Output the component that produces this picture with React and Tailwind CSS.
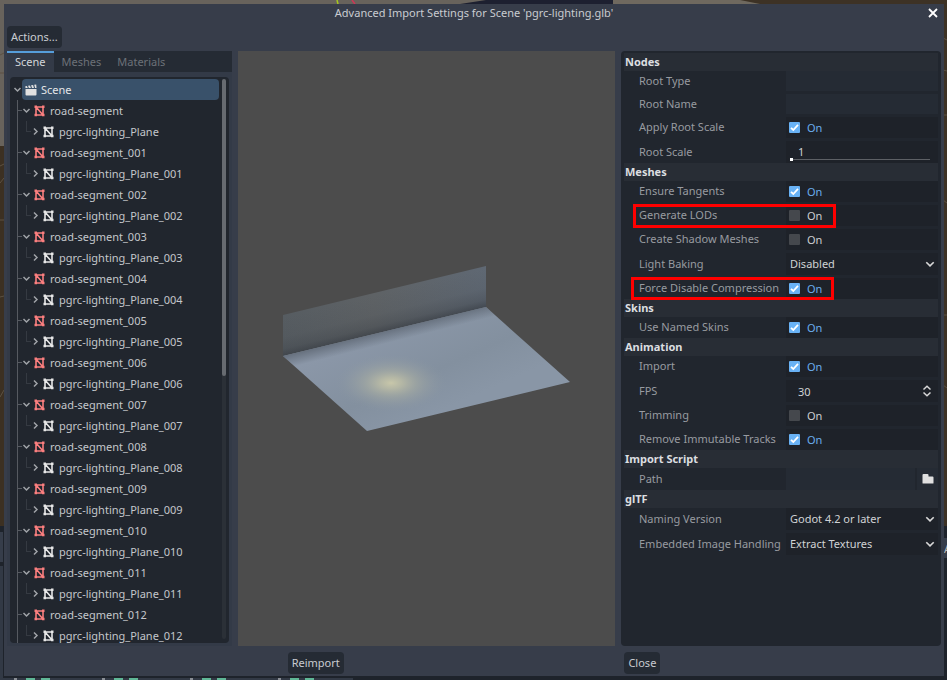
import React from "react";

const segments = ["", "_001", "_002", "_003", "_004", "_005", "_006", "_007", "_008", "_009", "_010", "_011", "_012"];

function Backdrop() {
  return (
    <svg viewBox="0 0 947 680" preserveAspectRatio="none" className="absolute inset-0 h-full w-full" aria-hidden="true">
      <rect width="947" height="680" fill="#1e232b" />
      <rect width="947" height="146" fill="#68635c" />
      <rect y="146" width="947" height="380" fill="#3c3022" />
      <rect x="700" width="247" height="526" fill="#3d3225" />
      <path d="M460 4L486 0H613V4Z" fill="#1d2030" />
      <path d="M613 0H740L760 4H613Z" fill="#6f695f" />
      <path d="M337 0L338 4" stroke="#a6c81c" strokeWidth="1.500" />
      <path d="M352 0L355 4" stroke="#cf3557" strokeWidth="1.500" />
      <path d="M0 55L4 53M0 73H4M0 166L4 164M0 183L4 178M0 220H4M0 297L4 296M0 397L4 390M943 38L947 40M943 70L947 71M943 115H947M943 200L947 203M943 315H947M943 385L947 388" stroke="#5c5142" />
      <rect y="532" width="3" height="30" fill="#363d4a" />
      <rect y="566" width="3" height="114" fill="#323945" />
      <rect x="943" y="538" width="4" height="20" fill="#363d4a" />
      <text x="944" y="553" fontSize="11" fill="#b8bbc0">A</text>
      <rect y="678" width="353" height="2" fill="#323945" />
      {[14, 102, 190, 278].map((x) => (
        <g key={x}>
          <rect x={x} y="678" width="3" height="2" fill="#8b8f96" />
          <rect x={x + 12} y="678" width="9" height="2" fill="#5fb796" />
          <rect x={x + 27} y="678" width="9" height="2" fill="#5fb796" />
        </g>
      ))}
    </svg>
  );
}

function Chevron({ open = true, className = "" }) {
  return (
    <svg viewBox="0 0 9 9" className={"h-[9px] w-[9px] shrink-0 " + className} fill="none" stroke="currentColor" strokeWidth="1.5" aria-hidden="true">
      <path d={open ? "M1.5 3l3 3 3-3" : "M3 1.5l3 3-3 3"} />
    </svg>
  );
}

function MeshIcon({ className = "" }) {
  return (
    <svg viewBox="0 0 12 12" className={"h-3 w-3 shrink-0 " + className} aria-hidden="true">
      <path d="M2 2H9V10H2ZM2 2L9 10" fill="none" stroke="currentColor" strokeWidth="1.6" />
      <path d="M0.500 .5h2.500v2.500h-2.500zM8 .5h2.500v2.500h-2.500zM0.500 8.700h2.500v2.500h-2.500zM8 8.700h2.500v2.500h-2.500z" fill="currentColor" />
    </svg>
  );
}

function ClapperIcon() {
  return (
    <svg viewBox="0 0 12 12" className="h-3 w-3 shrink-0" fill="#e0e0e0" aria-hidden="true">
      <path d="M.5 5h11v5.500a1 1 0 0 1-1 1h-9a1 1 0 0 1-1-1zM.3 2.200l1.600-.3.9 2.200H.5zM3 1.700l2-.3.9 2.700h-2zM6.100 1.200l2-.3.9 3.200H7zM9.200.7l2-.3.300 3.700h-1.400z" />
    </svg>
  );
}

function Tree() {
  return (
    <div className="relative min-h-0 flex-1 overflow-hidden rounded-sm bg-[#21262e] pl-[3px] pt-[2px] text-[#c4c7cb]">
      <ul className="relative mr-[10px]">
        <li className="flex h-[21px] items-center">
          <Chevron className="text-[#a0a3a8]" />
          <span className="flex h-[21px] flex-1 items-center gap-1 rounded-sm bg-[#39516a] pl-[3px] text-[#e4e6e8]">
            <ClapperIcon />
            Scene
          </span>
        </li>
        <li className="ml-1 border-l border-[#565a61]">
          <ul>
            {segments.map((s) => (
              <li key={s}>
                <div className="flex h-[21px] items-center">
                  <span className="h-px w-1 bg-[#565a61]" />
                  <Chevron className="mr-[3px] text-[#a0a3a8]" />
                  <MeshIcon className="mr-1 text-[#fc7f7f]" />
                  road-segment{s}
                </div>
                <div className="flex h-[21px] items-center pl-2">
                  <span className="-mt-[10px] h-[11px] w-[5px] border-b border-l border-[#353a42]" />
                  <Chevron open={false} className="mr-[3px] text-[#a0a3a8]" />
                  <MeshIcon className="mr-1 text-[#e8e8e8]" />
                  pgrc-lighting_Plane{s}
                </div>
              </li>
            ))}
          </ul>
        </li>
      </ul>
      <div className="absolute bottom-1 right-[3px] top-[2px] w-1 rounded-full bg-[#2b3037]">
        <div className="h-[53%] rounded-full bg-[#676b71]" />
      </div>
    </div>
  );
}

function Viewport() {
  return (
    <div className="min-w-0 flex-1 bg-[#4c4c4c]">
      <svg viewBox="0 0 377 595" className="h-full w-full" role="img" aria-label="Model preview">
        <defs>
          <linearGradient id="floor" gradientUnits="userSpaceOnUse" x1="140" y1="280" x2="180" y2="370">
            <stop offset="0" stopColor="#8b97a8" />
            <stop offset=".6" stopColor="#83909f" />
            <stop offset="1" stopColor="#8996a6" />
          </linearGradient>
          <linearGradient id="wall" gradientUnits="userSpaceOnUse" x1="45" y1="0" x2="248" y2="0">
            <stop offset="0" stopColor="#565c61" />
            <stop offset=".45" stopColor="#5e6265" />
            <stop offset="1" stopColor="#5f6873" />
          </linearGradient>
          <linearGradient id="wallShade" gradientUnits="userSpaceOnUse" x1="138" y1="244" x2="147" y2="281">
            <stop offset="0" stopColor="#363b42" stopOpacity="0" />
            <stop offset=".5" stopColor="#363b42" stopOpacity=".08" />
            <stop offset=".8" stopColor="#363b42" stopOpacity=".3" />
            <stop offset="1" stopColor="#363b42" stopOpacity=".7" />
          </linearGradient>
          <linearGradient id="edgeShade" gradientUnits="userSpaceOnUse" x1="147" y1="280" x2="150" y2="292">
            <stop offset="0" stopColor="#59626e" stopOpacity=".7" />
            <stop offset="1" stopColor="#59626e" stopOpacity="0" />
          </linearGradient>
          <radialGradient id="glow">
            <stop offset="0" stopColor="#c8c7aa" />
            <stop offset=".2" stopColor="#bcbda6" stopOpacity=".85" />
            <stop offset=".45" stopColor="#a9aea3" stopOpacity=".6" />
            <stop offset=".75" stopColor="#97a0a3" stopOpacity=".3" />
            <stop offset="1" stopColor="#8895a2" stopOpacity="0" />
          </radialGradient>
        </defs>
        <path d="M45 264L248 215V256L45 305Z" fill="url(#wall)" />
        <path d="M45 264L248 215V256L45 305Z" fill="url(#wallShade)" />
        <path d="M45 305L248 256L332 331L129 380Z" fill="url(#floor)" />
        <path d="M45 305L248 256L332 331L129 380Z" fill="url(#edgeShade)" />
        <ellipse cx="153" cy="332" rx="56" ry="29" fill="url(#glow)" />
      </svg>
    </div>
  );
}

function Section({ title, children }) {
  return (
    <section>
      <h2 className="h-[18px] bg-[#282d35] pl-px font-bold leading-[18px] text-[#dcdee0]">{title}</h2>
      <div className="flex flex-col gap-[3px]">{children}</div>
    </section>
  );
}

function Row({ id, label, height = "h-[21px]", mark, children }) {
  return (
    <div className={"relative flex " + height}>
      <label htmlFor={id} className="flex min-w-0 flex-1 items-center whitespace-nowrap pb-px pl-[15px] text-[#989ba0]">
        {label}
      </label>
      <div className="flex w-[152px] shrink-0 items-center">{children}</div>
      {mark && <span className={"pointer-events-none absolute border-[3px] border-[#ff0000] " + mark} />}
    </div>
  );
}

function TextRow({ id, label, height = "h-5", browse }) {
  return (
    <Row id={id} label={label} height={height}>
      <input id={id} type="text" className="h-full min-w-0 flex-1 bg-[#252b34] px-1 outline-none" />
      {browse && (
        <button type="button" aria-label="Browse" className="ml-[2px] flex h-full w-[21px] items-center justify-center bg-[#252b34]">
          <svg viewBox="0 0 12 12" className="h-3 w-3" fill="#e0e0e0" aria-hidden="true">
            <path d="M.5 2a1 1 0 0 1 1-1h4a1 1 0 0 1 1 1v1.500h4a1 1 0 0 1 1 1V10a.5.5 0 0 1-.5.5H1a.5.5 0 0 1-.5-.5z" />
          </svg>
        </button>
      )}
    </Row>
  );
}

function CheckRow({ id, label, on = false, mark }) {
  return (
    <Row id={id} label={label} mark={mark}>
      <label className="flex h-full flex-1 items-center gap-[7px] bg-[#1e2229] pl-[3px] text-[#cdcfd2] has-checked:text-[#6aaeed]">
        <span className="relative h-[11px] w-[11px]">
          <input id={id} type="checkbox" defaultChecked={on} className="peer block h-[11px] w-[11px] appearance-none rounded-[1px] bg-[#45484d] checked:bg-[#69b2f5]" />
          <svg viewBox="0 0 11 11" className="pointer-events-none absolute inset-0 hidden h-[11px] w-[11px] peer-checked:block" fill="none" stroke="#fff" strokeWidth="1.8" aria-hidden="true">
            <path d="M2 5.800l2.300 2.200L9 2.800" />
          </svg>
        </span>
        On
      </label>
    </Row>
  );
}

function SelectRow({ id, label, value }) {
  return (
    <Row id={id} label={label} height="h-[22px]">
      <div className="relative h-full flex-1">
        <select id={id} className="h-full w-full appearance-none bg-[#1e2229] pl-1 pr-5 text-[#d0d2d5] outline-none">
          <option>{value}</option>
        </select>
        <svg viewBox="0 0 10 10" className="pointer-events-none absolute right-[3px] top-[6px] h-[10px] w-[10px]" fill="none" stroke="#d8d8d8" strokeWidth="1.600" aria-hidden="true">
          <path d="M1.300 3.200L5 6.900l3.700-3.700" />
        </svg>
      </div>
    </Row>
  );
}

function Inspector() {
  return (
    <div className="w-80 shrink-0 overflow-hidden rounded-sm bg-[#21262e] px-[3px] pt-[2px]">
      <Section title="Nodes">
        <TextRow id="root-type" label="Root Type" />
        <TextRow id="root-name" label="Root Name" />
        <CheckRow id="apply-scale" label="Apply Root Scale" on />
        <Row id="root-scale" label="Root Scale" height="h-[22px]">
          <div className="relative h-full flex-1 bg-[#1e2229] pl-3">
            <input id="root-scale" type="text" defaultValue="1" className="block h-5 w-full bg-transparent text-[#d0d2d5] outline-none" />
            <input
              type="range"
              min="1"
              max="100"
              defaultValue="1"
              aria-label="Root Scale slider"
              className="absolute bottom-[3px] left-1 h-px w-[140px] appearance-none bg-[#5d6065] [&::-webkit-slider-thumb]:h-[3px] [&::-webkit-slider-thumb]:w-[3px] [&::-webkit-slider-thumb]:appearance-none [&::-webkit-slider-thumb]:bg-white"
            />
          </div>
        </Row>
      </Section>
      <Section title="Meshes">
        <CheckRow id="tangents" label="Ensure Tangents" on />
        <CheckRow id="lods" label="Generate LODs" mark="-top-px left-[9px] h-6 w-[203px]" />
        <CheckRow id="shadow" label="Create Shadow Meshes" />
        <SelectRow id="baking" label="Light Baking" value="Disabled" />
        <CheckRow id="compression" label="Force Disable Compression" on mark="-top-px left-[7px] h-[23px] w-[203px]" />
      </Section>
      <Section title="Skins">
        <CheckRow id="skins" label="Use Named Skins" on />
      </Section>
      <Section title="Animation">
        <CheckRow id="import" label="Import" on />
        <Row id="fps" label="FPS" height="h-[22px]">
          <input id="fps" type="text" defaultValue="30" className="h-full min-w-0 flex-1 bg-[#1e2229] pl-3 text-[#d0d2d5] outline-none" />
          <button type="button" aria-label="Step value" className="flex h-full w-[22px] items-center justify-center bg-[#1e2229]">
            <svg viewBox="0 0 10 12" className="h-3 w-[10px]" fill="none" stroke="#d8d8d8" strokeWidth="1.500" aria-hidden="true">
              <path d="M1.500 4.500L5 1.200l3.500 3.300M1.500 7.500L5 10.800l3.500-3.300" />
            </svg>
          </button>
        </Row>
        <CheckRow id="trimming" label="Trimming" />
        <CheckRow id="immutable" label="Remove Immutable Tracks" on />
      </Section>
      <Section title="Import Script">
        <TextRow id="path" label="Path" height="h-[22px]" browse />
      </Section>
      <Section title="glTF">
        <SelectRow id="naming" label="Naming Version" value="Godot 4.2 or later" />
        <SelectRow id="images" label="Embedded Image Handling" value="Extract Textures" />
      </Section>
    </div>
  );
}

export default function App() {
  return (
    <div className="relative h-screen overflow-hidden pb-1 pl-1 pr-[3px] pt-1 font-['Noto_Sans',sans-serif] text-[11px] leading-4">
      <Backdrop />
      <main className="relative flex h-full flex-col bg-[#373d4a] px-[3px]">
        <header className="relative flex h-[22px] shrink-0 items-start justify-center pt-px text-[#c9ccd1]">
          <h1>Advanced Import Settings for Scene 'pgrc-lighting.glb'</h1>
          <button type="button" aria-label="Close window" className="absolute right-[3px] top-1">
            <svg viewBox="0 0 10 10" className="h-[10px] w-[10px]" stroke="#fff" strokeWidth="1.800" aria-hidden="true">
              <path d="M1 1l8 8M9 1L1 9" />
            </svg>
          </button>
        </header>
        <div className="mb-[3px] shrink-0">
          <button type="button" className="h-[22px] rounded-sm bg-[#252b34] px-1 text-[#c9ccd1]">Actions...</button>
        </div>
        <div className="flex min-h-0 flex-1 gap-[6px]">
          <div className="flex w-[225px] shrink-0 flex-col">
            <div role="tablist" className="flex h-[21px] shrink-0 bg-[#252b34] text-[#6c7178]">
              <button role="tab" aria-selected="true" className="border-t-2 border-[#569eda] bg-[#333a47] px-2 pb-[2px] text-[#d4d7da]">Scene</button>
              <button role="tab" aria-selected="false" className="px-2">Meshes</button>
              <button role="tab" aria-selected="false" className="px-2">Materials</button>
            </div>
            <div className="flex min-h-0 flex-1 flex-col bg-[#333a47] px-[3px] pb-[3px] pt-[5px]">
              <Tree />
            </div>
          </div>
          <Viewport />
          <Inspector />
        </div>
        <footer className="flex h-[30px] shrink-0 items-center justify-evenly pt-1">
          <button type="button" className="h-[22px] rounded-sm bg-[#252b34] px-1 text-[#c9ccd1]">Reimport</button>
          <button type="button" className="h-[22px] rounded-sm bg-[#252b34] px-1 text-[#c9ccd1]">Close</button>
        </footer>
      </main>
    </div>
  );
}
